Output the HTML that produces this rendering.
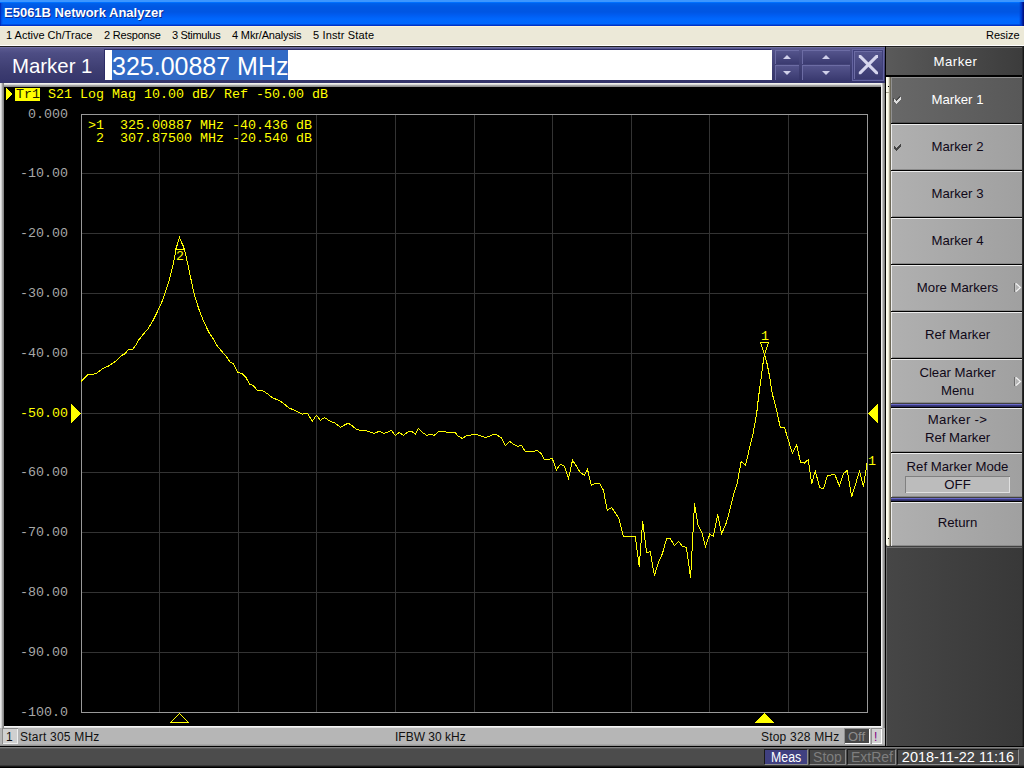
<!DOCTYPE html>
<html lang="en">
<head>
<meta charset="utf-8">
<title>E5061B Network Analyzer</title>
<style>
html,body{margin:0;padding:0;}
body{width:1024px;height:768px;overflow:hidden;position:relative;background:#404040;font-family:"Liberation Sans","DejaVu Sans",sans-serif;}
.abs{position:absolute;}
#title{left:0;top:0;width:1024px;height:26px;background:linear-gradient(to bottom,#3c96ff 0,#3c96ff 2px,#0070ff 2px,#0070ff 3px,#0060ea 3.5px,#0057e3 7px,#0056e3 12px,#005cf0 15px,#0067fd 19px,#0068fe 23.5px,#0050e0 24px,#0050e0 25px,#0032c8 25px);}
#title span{position:absolute;left:4px;top:5px;font-weight:bold;font-size:13px;line-height:16px;color:#fff;white-space:nowrap;text-shadow:1px 1px 0 #0a2a90;}
#menu{left:0;top:26px;width:1024px;height:19px;border-bottom:1px solid #fff;box-shadow:inset 0 1px 0 #fbf4da;background:#ece9d8;font-size:11px;color:#000;}
#menu span{position:absolute;top:3px;line-height:13px;white-space:nowrap;}
/* entry bar */
#entry{left:0;top:47px;width:885px;height:36px;background:linear-gradient(to bottom,#8484b4 0,#5a5a90 1px,#4d4d84 6px,#3e3e72 22px,#34346a 36px);}
#entry .lbl{position:absolute;left:12px;top:7px;font-size:20.4px;line-height:24px;color:#fff;white-space:nowrap;}
#entry .inp{position:absolute;left:105px;top:3px;width:667px;height:30px;background:#fff;box-shadow:-1px -1px 0 #2c2c66;}
#entry .sel{position:absolute;left:7px;top:0;height:30px;width:176px;background:#316ac5;}
#entry .sel span{position:absolute;left:0px;top:1px;font-size:25px;line-height:30px;color:#fff;white-space:nowrap;}
.ebtn{position:absolute;background:linear-gradient(to bottom,#56568e,#3a3a70);box-shadow:inset 1px 1px 0 #6c6ca4;}
.tri-u{position:absolute;width:0;height:0;border-left:4px solid transparent;border-right:4px solid transparent;border-bottom:4px solid #d0d0ea;}
.tri-d{position:absolute;width:0;height:0;border-left:4px solid transparent;border-right:4px solid transparent;border-top:4px solid #d0d0ea;}
/* plot */
#plotframe{left:0;top:83px;width:885px;height:645px;background:linear-gradient(to right,#e8e8e8 0,#e8e8e8 1px,#d0d0d0 1px,#d0d0d0 2px,#a0a0a0 2px,#a0a0a0 3px,#888 3px,#888 4px,transparent 4px,transparent 881px,#f0f0f0 881px,#f0f0f0 882px,#c0c0c0 882px,#c0c0c0 883px,#9a9a9a 883px,#9a9a9a 884px,#808080 884px),linear-gradient(to bottom,#f0f0ec 0,#f0f0ec 1px,#d8d8d8 1px,#d8d8d8 2px,#a8a8a8 2px,#a8a8a8 3px,#909090 3px,#909090 4px,#000 4px,#000 643px,#f4f4f4 643px,#f4f4f4 644px,#e0e0e0 644px);}
#plot{left:4px;top:87px;width:877px;height:639px;background:#000;}
.mono{font-family:"Liberation Mono","DejaVu Sans Mono",monospace;font-size:13.33px;line-height:13px;white-space:pre;position:absolute;}
.yl{color:#ffff00;}
.gl{color:#a8a8a8;text-align:right;width:64px;left:4px;}
/* channel bar */
#chbar{left:0;top:728px;width:885px;height:18px;background:linear-gradient(to bottom,#b6b6b6 0,#b6b6b6 16px,#a8a8a8 16px,#a8a8a8 17px,#949494 17px);font-size:12px;color:#101010;}
#chbar span{position:absolute;top:2px;line-height:14px;white-space:nowrap;}
/* status bar */
#status{left:0;top:747px;width:1024px;height:21px;background:linear-gradient(to bottom,#808080 0,#808080 1px,#5c5c5c 1px,#5c5c5c 2px,#4c4c4c 2px,#4c4c4c 18px,#383838 18px,#383838 19px,#181818 19px,#181818 20px,#000 20px);}
.sbox{position:absolute;top:2px;height:14px;font-size:14px;line-height:14px;text-align:center;white-space:nowrap;background:#464646;border:1px solid;border-color:#1a1a1a #8c8c8c #8c8c8c #1a1a1a;}
.sbox b{font-weight:normal;display:inline-block;}
/* softkeys */
#skhead{left:886px;top:47px;width:136px;height:28px;background:linear-gradient(to right,#5a5a5a,#3c3c3c);box-shadow:inset 0 1px 0 #6c6c6c;color:#fff;font-size:13.2px;letter-spacing:0.5px;text-align:center;line-height:30px;padding-left:3px;box-sizing:border-box;}
.sk{position:absolute;left:891px;width:131px;height:47px;box-sizing:border-box;background:linear-gradient(to right,#b0b0b0,#a0a0a0);border-bottom:1px solid #000;box-shadow:inset 1px 1px 0 #ececec,inset 0 -1px 0 #8a8a8a;color:#100818;font-size:13.2px;text-align:center;}
.sk div{position:absolute;left:0;width:133px;text-align:center;line-height:16px;white-space:nowrap;}
.sk.on{background:linear-gradient(to right,#686868,#585858);color:#fff;box-shadow:inset 1px 1px 0 #909090,inset 0 -1px 0 #505050;}
.sk.short{height:45px;border-bottom-color:#404040;}
.sep{left:891px;width:131px;height:4px;background:linear-gradient(to bottom,#6868c8 0,#6868c8 1px,#38387c 1px,#38387c 2px,#2c2c60 2px,#2c2c60 3px,#000 3px);}
.sk .val{left:14px;width:105px;height:17px;line-height:17px;background:#bcbcbc;box-shadow:inset 1px 1px 0 #808080,inset -1px -1px 0 #e0e0e0;}
.ylab{left:4px;width:64px;text-align:right;}
</style>
</head>
<body>
<div id="title" class="abs"><span>E5061B Network Analyzer</span><i style="position:absolute;left:0;top:3px;width:3px;height:23px;background:linear-gradient(to right,#0024b4,rgba(0,60,210,0.5) 50%,rgba(0,80,230,0))"></i><i style="position:absolute;right:0;top:2px;width:5px;height:24px;background:linear-gradient(to right,rgba(0,60,210,0),#0038c8 50%,#0030c0 60%,#001488 80%,#001080)"></i></div>
<div id="menu" class="abs">
<span style="left:6px">1 Active Ch/Trace</span>
<span style="left:104px;letter-spacing:-0.2px">2 Response</span>
<span style="left:172px;letter-spacing:-0.3px">3 Stimulus</span>
<span style="left:232px;letter-spacing:-0.15px">4 Mkr/Analysis</span>
<span style="left:313px;letter-spacing:0.15px">5 Instr State</span>
<span style="left:986px">Resize</span>
</div>
<div class="abs" style="left:0;top:46px;width:1024px;height:1px;background:#202020"></div>
<div id="entry" class="abs">
<div class="lbl">Marker 1</div>
<div class="inp"><div class="sel"><span>325.00887 MHz</span></div></div>
<div class="ebtn" style="left:775px;top:3px;width:24px;height:14px"><i class="tri-u" style="left:8px;top:5px"></i></div>
<div class="ebtn" style="left:775px;top:18px;width:24px;height:15px"><i class="tri-d" style="left:8px;top:6px"></i></div>
<div class="ebtn" style="left:802px;top:3px;width:48px;height:14px"><i class="tri-u" style="left:20px;top:5px"></i></div>
<div class="ebtn" style="left:802px;top:18px;width:48px;height:15px"><i class="tri-d" style="left:20px;top:6px"></i></div>
<div class="abs" style="left:852px;top:2px;width:30px;height:30px;border:1px solid #6464a0;background:#40407a"></div>
<div class="ebtn" style="left:854px;top:4px;width:28px;height:28px"><svg width="28" height="28" style="position:absolute;left:0;top:0"><g transform="translate(4.800,4)" fill="#d6d6ee"><path d="M0 0 L2.200 0 L19.200 17 L19.200 19.200 L17 19.200 L0 2.200 Z"/><path d="M19.200 0 L17 0 L0 17 L0 19.200 L2.200 19.200 L19.200 2.200 Z"/></g></svg></div>
</div>
<div class="abs" style="left:885px;top:46px;width:1px;height:700px;background:#000"></div>
<div id="plotframe" class="abs"></div>
<div id="plot" class="abs"></div>
<svg class="abs" style="left:4px;top:87px" width="877" height="639" viewBox="4 87 877 639" shape-rendering="crispEdges">
<line x1="159.5" y1="114" x2="159.5" y2="713" stroke="#333333"/>
<line x1="81" y1="173.5" x2="868" y2="173.5" stroke="#333333"/>
<line x1="238.5" y1="114" x2="238.5" y2="713" stroke="#333333"/>
<line x1="81" y1="233.5" x2="868" y2="233.5" stroke="#333333"/>
<line x1="316.5" y1="114" x2="316.5" y2="713" stroke="#333333"/>
<line x1="81" y1="293.5" x2="868" y2="293.5" stroke="#333333"/>
<line x1="395.5" y1="114" x2="395.5" y2="713" stroke="#333333"/>
<line x1="81" y1="353.5" x2="868" y2="353.5" stroke="#333333"/>
<line x1="474.5" y1="114" x2="474.5" y2="713" stroke="#333333"/>
<line x1="81" y1="413.5" x2="868" y2="413.5" stroke="#333333"/>
<line x1="552.5" y1="114" x2="552.5" y2="713" stroke="#333333"/>
<line x1="81" y1="472.5" x2="868" y2="472.5" stroke="#333333"/>
<line x1="631.5" y1="114" x2="631.5" y2="713" stroke="#333333"/>
<line x1="81" y1="532.5" x2="868" y2="532.5" stroke="#333333"/>
<line x1="709.5" y1="114" x2="709.5" y2="713" stroke="#333333"/>
<line x1="81" y1="592.5" x2="868" y2="592.5" stroke="#333333"/>
<line x1="788.5" y1="114" x2="788.5" y2="713" stroke="#333333"/>
<line x1="81" y1="652.5" x2="868" y2="652.5" stroke="#333333"/>
<rect x="81.5" y="114.5" width="786" height="598" fill="none" stroke="#999999"/>
<polyline fill="none" stroke="#ffff00" stroke-width="1" shape-rendering="crispEdges" points="81.0,381.4 88.2,374.4 93.2,374.4 96.3,373.3 102.6,368.6 108.0,366.3 115.8,361.1 121.3,355.6 125.2,353.6 128.3,349.4 132.6,349.4 136.2,344.7 138.5,340.3 142.4,335.3 147.9,329.0 152.6,321.3 157.3,311.9 161.2,303.3 163.0,299.2 165.0,293.4 169.3,279.7 173.7,262.1 176.1,249.4 179.4,237.2 183.0,245.5 185.4,253.3 188.8,269.0 192.7,287.5 194.8,296.3 198.7,308.8 203.3,320.5 208.8,332.2 213.5,339.2 217.4,346.3 222.1,351.7 226.8,357.2 229.9,361.9 233.4,363.8 237.8,372.3 242.5,373.8 245.9,377.3 249.5,384.1 253.4,385.6 257.3,390.3 262.5,390.6 267.5,393.8 273.0,398.1 279.2,400.3 283.9,403.9 289.4,408.1 295.6,410.9 301.9,414.1 307.8,413.6 312.3,421.4 316.4,415.2 320.3,420.3 324.5,417.5 329.2,420.6 334.7,423.0 340.6,427.3 348.0,423.1 351.1,425.0 356.6,429.4 360.5,430.3 365.2,430.5 369.8,432.0 374.5,433.3 379.2,431.3 383.9,433.4 387.8,432.3 391.3,430.3 395.3,435.5 399.2,432.3 403.4,435.5 407.3,432.3 411.3,431.1 415.6,434.2 418.3,428.4 423.0,432.8 426.9,435.5 430.0,434.2 434.2,435.5 438.6,431.3 444.1,431.3 446.4,432.3 454.7,432.3 458.1,435.9 462.5,438.6 466.4,435.5 470.6,435.2 474.5,434.2 480.0,435.5 485.5,437.5 489.4,436.3 493.3,434.2 496.4,434.4 501.6,438.1 505.3,445.6 509.7,441.4 513.6,444.4 517.5,446.4 521.4,445.3 525.3,451.4 533.1,451.4 537.0,450.5 540.6,452.8 544.4,459.5 548.8,459.5 552.3,458.4 556.3,470.0 560.5,464.2 564.4,466.3 568.6,478.3 572.5,460.3 576.1,465.8 580.0,472.0 584.2,475.2 587.5,469.4 591.4,485.3 595.6,483.4 599.5,483.4 603.4,490.3 607.3,510.3 611.6,507.5 615.2,512.7 619.1,518.9 623.3,536.4 635.3,536.4 639.2,566.7 642.7,521.4 646.6,552.7 650.2,551.6 654.4,575.6 658.6,562.0 662.5,553.4 666.6,538.6 670.3,538.6 674.4,545.6 678.6,541.4 682.5,546.4 686.4,547.5 690.6,577.7 694.5,503.4 698.1,525.3 702.0,533.1 705.5,546.7 709.8,534.2 713.4,536.3 717.7,514.4 721.6,533.4 725.5,525.3 729.4,512.0 733.3,495.6 737.2,483.8 741.1,461.6 745.5,465.3 748.9,450.9 752.8,435.3 756.7,413.4 758.4,398.1 761.4,376.0 763.6,359.0 764.5,354.5 766.9,363.0 769.5,376.0 772.1,393.0 776.3,408.8 780.2,427.0 784.5,427.5 788.8,441.6 792.3,453.3 796.6,444.7 800.5,462.2 804.4,463.1 808.3,459.5 811.7,483.8 815.3,470.8 819.5,487.2 823.4,488.9 827.5,475.6 834.8,474.4 839.5,486.1 843.4,473.6 847.3,470.5 851.6,497.0 859.5,471.3 863.4,486.9 867.0,463.4"/>
<polygon points="71,404 81,413.5 71,423" fill="#ffff00"/>
<polygon points="878,404 868,413.5 878,423" fill="#ffff00"/>
<polygon points="6,88 12.5,94 6,100.5" fill="#ffff00"/>
<polygon points="179.5,237.5 175.5,249.5 184.5,249.5" fill="none" stroke="#ffff00" stroke-linejoin="bevel" shape-rendering="crispEdges"/>
<polygon points="760.5,342.5 768.5,342.5 764.5,354.5" fill="none" stroke="#ffff00" stroke-linejoin="bevel" shape-rendering="crispEdges"/>
<polygon points="179.5,713.5 170.5,722.5 188.5,722.5" fill="none" stroke="#ffff00" stroke-linejoin="bevel" shape-rendering="crispEdges"/>
<polygon points="764.5,713 755,722.800 774,722.800" fill="#ffff00" shape-rendering="crispEdges"/>
</svg>
<div class="mono gl ylab" style="top:108px">0.000</div>
<div class="mono gl ylab" style="top:167px">-10.00</div>
<div class="mono gl ylab" style="top:227px">-20.00</div>
<div class="mono gl ylab" style="top:287px">-30.00</div>
<div class="mono gl ylab" style="top:347px">-40.00</div>
<div class="mono yl ylab" style="top:407px">-50.00</div>
<div class="mono gl ylab" style="top:466px">-60.00</div>
<div class="mono gl ylab" style="top:526px">-70.00</div>
<div class="mono gl ylab" style="top:586px">-80.00</div>
<div class="mono gl ylab" style="top:646px">-90.00</div>
<div class="mono gl ylab" style="top:706px">-100.0</div>
<div class="mono yl" style="left:15px;top:88px;width:25px;height:13px;background:#ffff00;"></div>
<div class="mono" style="left:16px;top:88px;color:#202000">Tr1</div>
<div class="mono yl" style="left:48px;top:88px">S21 Log Mag 10.00 dB/ Ref -50.00 dB</div>
<div class="mono yl" style="left:88px;top:119px">&gt;1  325.00887 MHz -40.436 dB</div>
<div class="mono yl" style="left:88px;top:132px"> 2  307.87500 MHz -20.540 dB</div>
<div class="mono yl" style="left:176px;top:250px">2</div>
<div class="mono yl" style="left:761px;top:330px">1</div>
<div class="mono yl" style="left:868px;top:455px">1</div>
<div id="chbar" class="abs">
<div class="abs" style="left:2px;top:0;width:16px;height:16px;background:#d0d0d0;box-shadow:inset 1px 1px 0 #8c8c8c,inset -1px -1px 0 #f0f0f0"></div>
<span style="left:6px">1</span>
<span style="left:20px;letter-spacing:0.22px">Start 305 MHz</span>
<span style="left:395px">IFBW 30 kHz</span>
<span style="left:761px;letter-spacing:0.2px">Stop 328 MHz</span>
<div class="abs" style="left:844px;top:0;width:26px;height:16px;background:#484848;box-shadow:inset 1px 1px 0 #909090,inset -1px -1px 0 #fff"></div>
<span style="left:848px;color:#8e8e8e;font-size:13px;top:2px">Off</span>
<div class="abs" style="left:871px;top:0;width:11px;height:16px;background:#d0d0d0;box-shadow:inset 1px 1px 0 #909090,inset -1px -1px 0 #fff"></div>
<span style="left:874px;color:#800080">!</span>
</div>
<div class="abs" style="left:0;top:746px;width:1024px;height:1px;background:#000"></div>
<div id="status" class="abs">
<div class="sbox" style="left:764px;width:42px;background:#404080;color:#fff"><b style="transform:scaleX(0.88)">Meas</b></div>
<div class="sbox" style="left:809px;width:35px;color:#7e7e7e">Stop</div>
<div class="sbox" style="left:847px;width:47px;color:#7e7e7e;text-indent:1px">ExtRef</div>
<div class="sbox" style="left:897px;width:120px;color:#fff;font-size:14.5px">2018-11-22 11:16</div>
</div>
<div class="abs" style="left:886px;top:47px;width:138px;height:699px;background:linear-gradient(to right,#464646,#383838)"></div>
<div class="abs" style="left:886px;top:547px;width:136px;height:199px;box-shadow:inset 1px 1px 0 #707070"></div>
<div id="skhead" class="abs">Marker</div>
<div class="abs" style="left:886px;top:75px;width:138px;height:2px;background:#000"></div>
<div class="abs" style="left:886px;top:77px;width:5px;height:469px;border-radius:0 0 2px 2px;background:linear-gradient(to right,#ffffee 0,#ffffee 1px,#fbfbee 1px,#fbfbee 2px,#e8e4d0 2px,#e8e4d0 3px,#a8a490 3px,#a8a490 4px,#6c6858 4px)"></div>
<div class="abs" style="left:888px;top:86px;width:1px;height:1px;background:#000"></div>
<div class="abs" style="left:886px;top:92px;width:4px;height:1px;background:#a8a490"></div>
<div class="abs" style="left:888px;top:538px;width:1px;height:1px;background:#000"></div>
<div class="sk on" style="top:77px"><div style="top:15px">Marker 1</div></div>
<div class="sk" style="top:124px"><div style="top:15px">Marker 2</div></div>
<div class="sk" style="top:171px"><div style="top:15px">Marker 3</div></div>
<div class="sk" style="top:218px"><div style="top:15px">Marker 4</div></div>
<div class="sk" style="top:265px"><div style="top:15px">More Markers</div></div>
<div class="sk" style="top:312px"><div style="top:15px">Ref Marker</div></div>
<div class="sk short" style="top:359px"><div style="top:6px">Clear Marker</div><div style="top:24px">Menu</div></div>
<div class="abs sep" style="top:404px"></div>
<div class="sk" style="top:408px;height:45px"><div style="top:4px;letter-spacing:0.3px">Marker -&gt;</div><div style="top:22px">Ref Marker</div></div>
<div class="sk short" style="top:453px"><div style="top:6px">Ref Marker Mode</div><div class="val" style="top:23px">OFF</div></div>
<div class="abs sep" style="top:498px"></div>
<div class="sk" style="top:502px;height:45px;border-bottom-color:#404040"><div style="top:13px">Return</div></div>
<div class="abs" style="left:1022px;top:46px;width:2px;height:700px;background:linear-gradient(to right,#2c2c2c 0,#2c2c2c 1px,#181818 1px)"></div>
<svg class="abs" style="left:886px;top:77px" width="138" height="470">
<path d="M7 21h1v3h-1zM8 22h1v3h-1zM9 23h1v3h-1zM10 22h1v3h-1zM11 21h1v3h-1zM12 20h1v3h-1zM13 19h1v3h-1z" fill="#484848" shape-rendering="crispEdges"/><path d="M8 22h1v3h-1zM9 23h1v3h-1zM10 24h1v3h-1zM11 23h1v3h-1zM12 22h1v3h-1zM13 21h1v3h-1zM14 20h1v3h-1z" fill="#dcdcdc" shape-rendering="crispEdges"/>
<path d="M7 68h1v3h-1zM8 69h1v3h-1zM9 70h1v3h-1zM10 69h1v3h-1zM11 68h1v3h-1zM12 67h1v3h-1zM13 66h1v3h-1z" fill="#b8b8b8" shape-rendering="crispEdges"/><path d="M8 69h1v3h-1zM9 70h1v3h-1zM10 71h1v3h-1zM11 70h1v3h-1zM12 69h1v3h-1zM13 68h1v3h-1zM14 67h1v3h-1z" fill="#454545" shape-rendering="crispEdges"/>
<path d="M128.500 206 v9" stroke="#6c6c6c" stroke-width="1" fill="none"/><path d="M129.500 206 v9" stroke="#c4c4c4" stroke-width="1" fill="none"/><path d="M130 206.5 l4.500 4 l-4.500 4" fill="#b4b4b4" stroke="#f4f4f4" stroke-width="1.200"/>
<path d="M128.500 300 v9" stroke="#6c6c6c" stroke-width="1" fill="none"/><path d="M129.500 300 v9" stroke="#c4c4c4" stroke-width="1" fill="none"/><path d="M130 300.5 l4.500 4 l-4.500 4" fill="#b4b4b4" stroke="#f4f4f4" stroke-width="1.200"/>
</svg>
</body>
</html>
